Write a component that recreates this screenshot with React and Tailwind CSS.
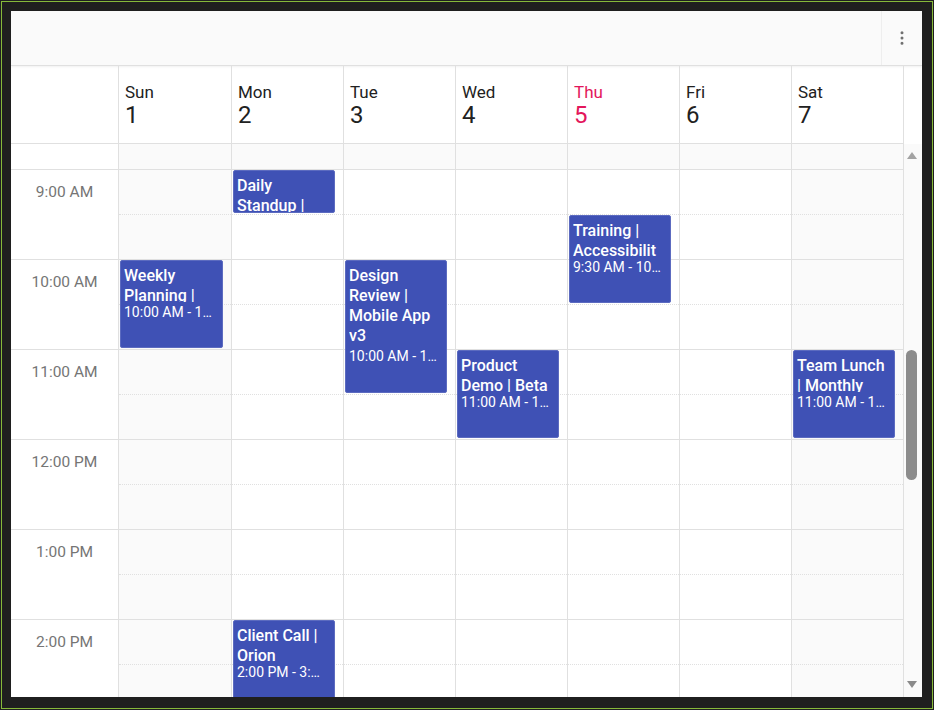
import { EllipsisVertical } from 'lucide-react';

const days = [
  { name: 'Sun', date: 1, weekend: true },
  { name: 'Mon', date: 2 },
  { name: 'Tue', date: 3 },
  { name: 'Wed', date: 4 },
  { name: 'Thu', date: 5, today: true },
  { name: 'Fri', date: 6 },
  { name: 'Sat', date: 7, weekend: true },
];

const hours = ['9:00 AM', '10:00 AM', '11:00 AM', '12:00 PM', '1:00 PM', '2:00 PM', '3:00 PM'];

const events = [
  { day: 0, start: 10, end: 11, subject: 'Weekly Planning | Sprint Goals', time: '10:00 AM - 11:00 AM' },
  { day: 1, start: 9, end: 9.5, subject: 'Daily Standup | Core Team', time: '9:00 AM - 9:30 AM' },
  { day: 1, start: 14, end: 15, subject: 'Client Call | Orion', time: '2:00 PM - 3:00 PM' },
  { day: 2, start: 10, end: 11.5, subject: 'Design Review | Mobile App v3', time: '10:00 AM - 11:30 AM' },
  { day: 3, start: 11, end: 12, subject: 'Product Demo | Beta Release', time: '11:00 AM - 12:00 PM' },
  { day: 4, start: 9.5, end: 10.5, subject: 'Training | Accessibility', time: '9:30 AM - 10:30 AM' },
  { day: 6, start: 11, end: 12, subject: 'Team Lunch | Monthly', time: '11:00 AM - 12:00 PM' },
];

// the view is scrolled so only the last 26px of the 8:30 slot shows
const FIRST = 26;
const HOUR = 90;
const offsetOf = (h) => FIRST + (h - 9) * HOUR;

// half-hour slots from 9:00 down to 3:00
const slots = Array.from({ length: 12 }, (_, i) => i);

const COLS = 'grid-cols-[108px_113px_repeat(6,112px)]';

function Appointment({ ev }) {
  const long = ev.end - ev.start > 1;
  return (
    <div
      className="absolute left-px right-[8px] overflow-hidden rounded-[2px] border border-[#5c6bc0] bg-[#3f51b5] pl-[3px] pr-[8px] pt-[5px] text-white"
      style={{ top: offsetOf(ev.start), height: (ev.end - ev.start) * HOUR - 2 }}
    >
      <div className={`overflow-hidden break-words text-[16px] font-medium leading-[20px] ${long ? 'max-h-[80px]' : 'max-h-[36px]'}`}>
        {ev.subject}
      </div>
      <div className="truncate text-[14px] leading-[20px]">{ev.time}</div>
    </div>
  );
}

function DayColumn({ day, index }) {
  const cellBg = day.weekend ? 'bg-[#fafafa]' : 'bg-white';
  return (
    <div className="relative flex flex-col border-r border-[#e0e0e0]">
      <div className="h-[26px] shrink-0 border-b border-[#e0e0e0] bg-[#fafafa]" />
      {slots.map((i) => (
        <div
          key={i}
          className={`h-[45px] shrink-0 border-b border-[#e0e0e0] ${i % 2 === 0 ? 'border-dotted' : 'border-solid'} ${cellBg}`}
        />
      ))}
      {events
        .filter((ev) => ev.day === index)
        .map((ev) => (
          <Appointment key={ev.subject} ev={ev} />
        ))}
    </div>
  );
}

export default function App() {
  return (
    <div className="h-[710px] w-[934px] bg-[#1f1f1f] pl-px pt-px font-['Roboto',sans-serif]">
      <div className="h-[708px] w-[932px] border border-[#86b93a] pl-[9px] pt-[9px]">
        <div className="flex h-[686px] w-[911px] flex-col overflow-hidden bg-white">
          {/* toolbar */}
          <div className="flex h-[55px] shrink-0 justify-end border-b border-[#e0e0e0] bg-[#fafafa] shadow-[0_1px_2px_rgba(0,0,0,0.06)]">
            <div className="flex w-[41px] items-center justify-center border-l border-[#eeeeee]">
              <EllipsisVertical size={18} className="text-[#6f6f6f]" />
            </div>
          </div>

          {/* date header */}
          <div className="flex h-[78px] shrink-0">
            <div className={`grid ${COLS} border-b border-[#e0e0e0]`}>
              <div className="border-r border-[#e0e0e0]" />
              {days.map((d) => (
                <div key={d.name} className="border-r border-[#e0e0e0] pl-[6px] pt-[16px]">
                  <div className={`text-[17px] leading-[20px] ${d.today ? 'text-[#e3165b]' : 'text-[#212121]'}`}>{d.name}</div>
                  <div className={`text-[24px] leading-[26px] ${d.today ? 'text-[#e3165b]' : 'text-[#212121]'}`}>{d.date}</div>
                </div>
              ))}
            </div>
            <div className="w-[18px]" />
          </div>

          {/* time grid */}
          <div className="flex min-h-0 flex-1 overflow-hidden">
            <div className={`grid ${COLS} items-start overflow-hidden`}>
              <div className="flex flex-col border-r border-[#e0e0e0]">
                <div className="h-[26px] shrink-0 border-b border-[#e0e0e0]" />
                {hours.map((h) => (
                  <div key={h} className="h-[90px] shrink-0 border-b border-[#e0e0e0] pt-[12px] text-center text-[15.5px] leading-[20px] text-[#757575]">
                    {h}
                  </div>
                ))}
              </div>
              {days.map((d, i) => (
                <DayColumn key={d.name} day={d} index={i} />
              ))}
            </div>

            {/* scrollbar */}
            <div className="relative w-[18px] bg-[#fafafa]">
              <svg className="absolute left-[3px] top-[8px]" width="10" height="7" viewBox="0 0 10 7">
                <polygon points="5,0 10,7 0,7" fill="#a3a3a3" />
              </svg>
              <div className="absolute left-[2px] top-[206px] h-[130px] w-[11px] rounded-full bg-[#8c8c8c]" />
              <svg className="absolute bottom-[9px] left-[3px]" width="10" height="7" viewBox="0 0 10 7">
                <polygon points="0,0 10,0 5,7" fill="#8a8a8a" />
              </svg>
            </div>
          </div>
        </div>
      </div>
    </div>
  );
}
